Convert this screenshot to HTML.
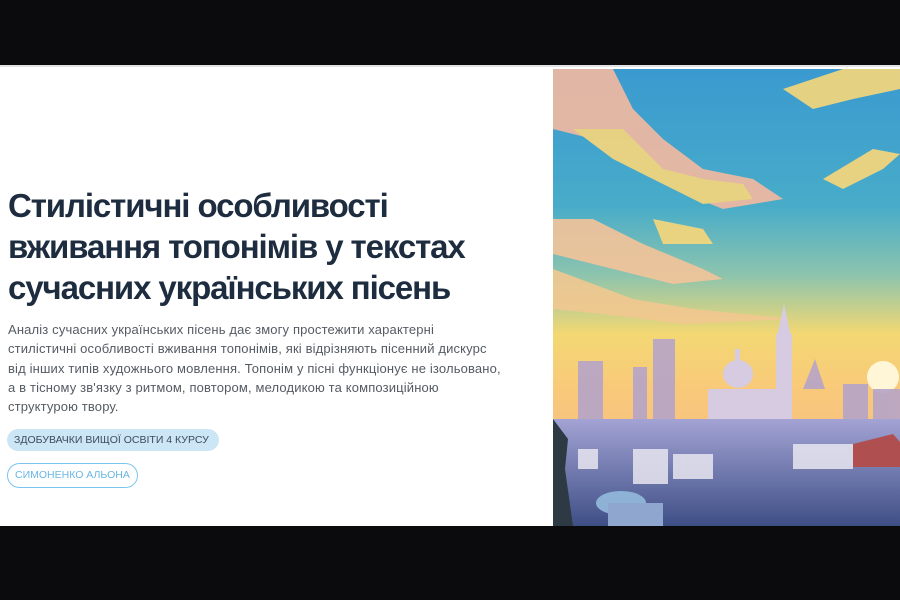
<!DOCTYPE html>
<html><head><meta charset="utf-8"><style>
*{margin:0;padding:0;box-sizing:border-box}
body{width:900px;height:600px;background:#0b0b0d;position:relative;overflow:hidden;font-family:"Liberation Sans","DejaVu Sans",sans-serif}
#panel{position:absolute;left:0;top:65px;width:900px;height:461px;background:#fff;border-top:2px solid #e2e2e2}
h1{position:absolute;left:8px;top:118px;white-space:nowrap;font-size:33px;line-height:41px;font-weight:bold;color:#1d2c3f;letter-spacing:-1.1px}
p{position:absolute;left:8px;top:253px;white-space:nowrap;font-size:13px;line-height:19.3px;color:#555b63;letter-spacing:0.15px}
.b1{position:absolute;left:7px;top:362px;height:22px;padding:0 10px 0 7px;border-radius:11px;background:#cde6f6;color:#3a4c5e;font-size:10.5px;line-height:22px}
.b2{position:absolute;left:7px;top:396px;height:25px;padding:0 7px;border-radius:13px;border:1px solid #7cc4ee;color:#6ab6e4;font-size:10.5px;line-height:23px}
#img{position:absolute;left:553px;top:2px;width:347px;height:457px;overflow:hidden}
</style></head><body>
<div id="panel">
<h1>Стилістичні особливості<br>вживання топонімів у текстах<br>сучасних українських пісень</h1>
<p>Аналіз сучасних українських пісень дає змогу простежити характерні<br>стилістичні особливості вживання топонімів, які відрізняють пісенний дискурс<br>від інших типів художнього мовлення. Топонім у пісні функціонує не ізольовано,<br>а в тісному зв'язку з ритмом, повтором, мелодикою та композиційною<br>структурою твору.</p>
<div class="b1">ЗДОБУВАЧКИ ВИЩОЇ ОСВІТИ 4 КУРСУ</div>
<div class="b2">СИМОНЕНКО АЛЬОНА</div>
<div id="img">
<svg width="347" height="457" viewBox="0 0 347 457">
<defs>
<linearGradient id="sky" x1="0" y1="0" x2="0" y2="1">
<stop offset="0" stop-color="#3a9ad0"/><stop offset="0.3" stop-color="#48acc9"/><stop offset="0.45" stop-color="#8cc4ae"/><stop offset="0.58" stop-color="#f3d873"/><stop offset="0.7" stop-color="#f9c97a"/><stop offset="1" stop-color="#f2b48c"/></linearGradient>
<linearGradient id="city" x1="0" y1="0" x2="0" y2="1"><stop offset="0" stop-color="#a3a3d4"/><stop offset="1" stop-color="#3e4f86"/></linearGradient>
</defs>
<rect width="347" height="457" fill="url(#sky)"/>
<g fill="#f8d77a" opacity="0.9">
<path d="M0 0 L60 0 80 40 110 70 150 100 200 110 230 130 170 140 120 120 80 100 40 70 0 60Z" fill="#f4b9a0"/>
<path d="M20 60 L70 60 110 100 150 110 190 115 200 130 150 135 100 110 60 90Z"/>
<path d="M0 150 L40 150 90 175 150 200 170 210 120 215 60 200 0 185Z" fill="#f4c49a"/>
<path d="M0 200 L80 230 140 240 240 250 130 255 50 245 0 240Z" fill="#f2c890"/>
<path d="M230 20 L290 0 347 0 347 20 300 30 260 40Z"/>
<path d="M270 110 L320 80 347 85 330 100 290 120Z"/>
<path d="M100 150 L150 160 160 175 110 175Z"/>
</g>
<circle cx="330" cy="308" r="16" fill="#fff6d8"/>
<g fill="#b6a4c8" opacity="0.9">
<rect x="25" y="292" width="25" height="60"/><rect x="80" y="298" width="14" height="55"/><rect x="100" y="270" width="22" height="85"/><rect x="290" y="315" width="25" height="40"/><rect x="320" y="320" width="27" height="40"/><path d="M250 320 L262 290 272 320Z"/>
</g>
<g fill="#d6cbe0">
<rect x="155" y="320" width="75" height="45"/><ellipse cx="185" cy="305" rx="15" ry="14"/><rect x="182" y="280" width="5" height="14"/><rect x="223" y="265" width="16" height="100"/><path d="M224 267 L231 235 238 267Z"/>
</g>
<rect x="0" y="350" width="347" height="107" fill="url(#city)"/>
<g fill="#e8e6f0" opacity="0.85"><rect x="25" y="380" width="20" height="20"/><rect x="80" y="380" width="35" height="35"/><rect x="120" y="385" width="40" height="25"/><rect x="240" y="375" width="60" height="25"/></g>
<path d="M300 375 L340 365 347 373 347 398 300 398Z" fill="#b04f4f"/>
<ellipse cx="68" cy="434" rx="25" ry="12" fill="#8db2d6"/>
<rect x="55" y="434" width="55" height="25" fill="#8fa7cf"/>
<path d="M0 350 L15 370 12 400 20 457 0 457Z" fill="#2d3a44"/>
</svg>
</div>
</div>
</body></html>
